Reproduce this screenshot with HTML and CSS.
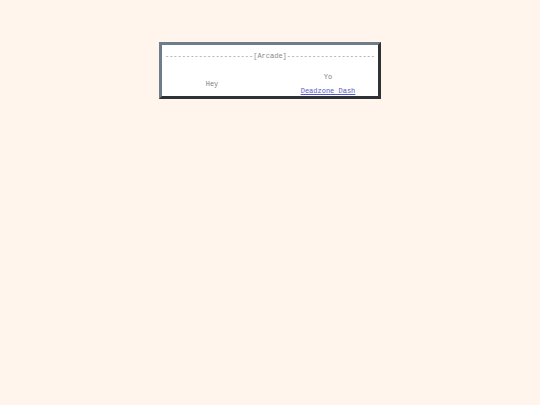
FILE: index.html
```html
<!DOCTYPE html>
<html>
<head>
<meta charset="utf-8">
<link rel="stylesheet" href="styles.css">
</head>
<body>
<div class="box">
  <div class="title">---------------------[Arcade]---------------------</div>
  <div class="cols">
    <div class="col">Hey</div>
    <div class="col">
      <div class="yo">Yo</div>
      <a class="link" href="#">Deadzone Dash</a>
    </div>
  </div>
</div>
</body>
</html>
```
FILE: styles.css
```css
html, body {
  margin: 0;
  padding: 0;
  background: #fff5ec;
}
body {
  padding-top: 42px;
  font-family: "Courier New", "Liberation Mono", monospace;
  font-size: 7px;
  line-height: 8px;
  color: #808080;
}
.box {
  width: 216px;
  margin: 0 auto;
  background: #fff;
  border: 3px solid;
  border-color: #6f7c89 #2e3236 #2e3236 #6f7c89;
  padding: 7px 0 1px 0;
}
.title {
  text-align: center;
  color: #8a8a8a;
  white-space: nowrap;
  overflow: hidden;
}
.cols {
  display: flex;
  align-items: center;
  gap: 16px;
  margin-top: 13px;
}
.col {
  flex: 1;
  text-align: center;
}
.yo {
  margin-bottom: 6px;
}
.link {
  color: #5a5acc;
  text-decoration: underline;
}
```
